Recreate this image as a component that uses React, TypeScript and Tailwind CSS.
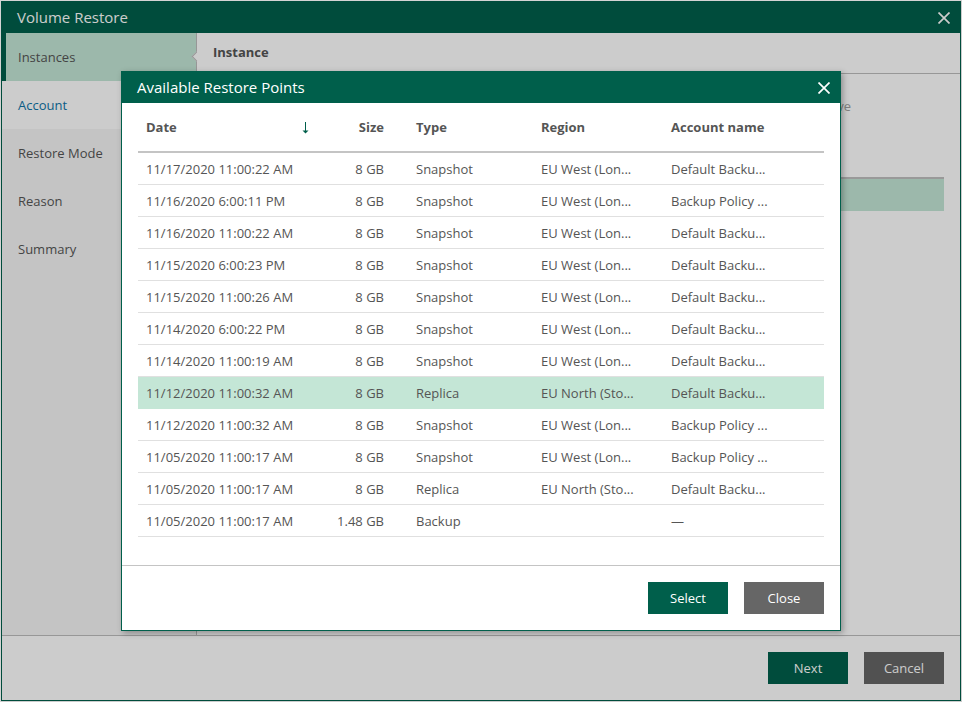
import React from 'react';

interface RestorePoint {
  date: string;
  size: string;
  type: string;
  region: string;
  account: string;
  selected?: boolean;
}

const points: RestorePoint[] = [
  { date: '11/17/2020 11:00:22 AM', size: '8 GB', type: 'Snapshot', region: 'EU West (Lon...', account: 'Default Backu...' },
  { date: '11/16/2020 6:00:11 PM', size: '8 GB', type: 'Snapshot', region: 'EU West (Lon...', account: 'Backup Policy ...' },
  { date: '11/16/2020 11:00:22 AM', size: '8 GB', type: 'Snapshot', region: 'EU West (Lon...', account: 'Default Backu...' },
  { date: '11/15/2020 6:00:23 PM', size: '8 GB', type: 'Snapshot', region: 'EU West (Lon...', account: 'Default Backu...' },
  { date: '11/15/2020 11:00:26 AM', size: '8 GB', type: 'Snapshot', region: 'EU West (Lon...', account: 'Default Backu...' },
  { date: '11/14/2020 6:00:22 PM', size: '8 GB', type: 'Snapshot', region: 'EU West (Lon...', account: 'Default Backu...' },
  { date: '11/14/2020 11:00:19 AM', size: '8 GB', type: 'Snapshot', region: 'EU West (Lon...', account: 'Default Backu...' },
  { date: '11/12/2020 11:00:32 AM', size: '8 GB', type: 'Replica', region: 'EU North (Sto...', account: 'Default Backu...', selected: true },
  { date: '11/12/2020 11:00:32 AM', size: '8 GB', type: 'Snapshot', region: 'EU West (Lon...', account: 'Backup Policy ...' },
  { date: '11/05/2020 11:00:17 AM', size: '8 GB', type: 'Snapshot', region: 'EU West (Lon...', account: 'Backup Policy ...' },
  { date: '11/05/2020 11:00:17 AM', size: '8 GB', type: 'Replica', region: 'EU North (Sto...', account: 'Default Backu...' },
  { date: '11/05/2020 11:00:17 AM', size: '1.48 GB', type: 'Backup', region: '', account: '—' },
];

const columns = 'grid grid-cols-[178px_76px_141px_130px_161px]';

const CloseIcon: React.FC<{ className: string }> = ({ className }) => (
  <svg width="12" height="12" viewBox="0 0 12 12" fill="none" stroke="currentColor" strokeWidth="1.7" className={className}>
    <path d="M0.5 0.5L11.5 11.5M11.5 0.5L0.5 11.5" />
  </svg>
);

const App: React.FC = () => {
  return (
    <div className="relative h-[702px] w-[962px] overflow-hidden border-l border-t border-[#d4d4d4] bg-white pb-px pr-px font-['Open_Sans',sans-serif] text-[13px] text-[#555555]">
      {/* Wizard behind the dialog */}
      <div className="flex h-[700px] w-[960px] flex-col border border-[#005f4b] bg-white">
        <div className="flex h-[31px] shrink-0 items-center justify-between bg-[#005f4b] pl-[15px] pr-[10px] text-[15px] text-white">
          <span>Volume Restore</span>
          <CloseIcon className="text-white" />
        </div>

        <div className="flex min-h-0 flex-1">
          <div className="w-[194px] shrink-0 bg-[#f5f5f5]">
            <div className="relative flex h-12 items-center border-l-4 border-[#005f4b] bg-[#c4e6d6] pl-3 pt-[2px]">
              Instances
              <div className="absolute right-[-4px] top-[20px] h-[7px] w-[7px] rotate-45 border-b border-l border-[#bdbdbd] bg-white" />
            </div>
            <div className="flex h-12 items-center bg-[#ffffff] pl-4 pt-[2px] text-[#0f75a8]">Account</div>
            <div className="flex h-12 items-center pl-4 pt-[2px]">Restore Mode</div>
            <div className="flex h-12 items-center pl-4 pt-[2px]">Reason</div>
            <div className="flex h-12 items-center pl-4 pt-[2px]">Summary</div>
          </div>

          <div className="min-w-0 flex-1 border-l border-[#bdbdbd]">
            <div className="flex h-[41px] items-center border-b border-[#bdbdbd] pl-4 font-bold">Instance</div>
            <p className="mt-[23px] w-[654px] whitespace-nowrap text-right text-[#a0a0a0]">
              Select an instance to restore and choose a restore point to have
            </p>
            <div className="ml-4 mr-4 mt-[60px] h-[34px] border-t-2 border-[#c0c0c0] bg-[#c4e6d6]" />
          </div>
        </div>

        <div className="flex h-[65px] shrink-0 items-start justify-end gap-4 border-t border-[#bdbdbd] pr-[16px] pt-4">
          <button className="h-8 w-20 bg-[#005f4b] pt-[2px] text-white">Next</button>
          <button className="h-8 w-20 bg-[#666666] pt-[2px] text-white">Cancel</button>
        </div>
      </div>

      {/* Modal backdrop */}
      <div className="absolute inset-0 bg-black/20" />

      {/* Available Restore Points dialog */}
      <div className="absolute left-[120px] top-[70px] flex h-[560px] w-[720px] flex-col border border-[#005f4b] bg-white shadow-[2px_2px_6px_rgba(0,0,0,0.3)]">
        <div className="flex h-[31px] shrink-0 items-center justify-between bg-[#005f4b] pl-[15px] pr-[10px] text-[15px] text-white">
          <span>Available Restore Points</span>
          <CloseIcon className="text-white" />
        </div>

        <div className="flex-1 px-4">
          <div className={`${columns} h-[50px] items-center border-b-2 border-[#c4c4c4] pt-[2px] font-bold`}>
            <div className="flex items-center justify-between pl-2 pr-[6px]">
              <span>Date</span>
              <svg width="9" height="12" viewBox="0 0 9 12" className="text-[#005f4b]">
                <path d="M4.5 0V10" stroke="currentColor" strokeWidth="1" />
                <path d="M1.5 8.5H7.5L4.5 11.5Z" fill="currentColor" />
              </svg>
            </div>
            <div className="pr-2 text-right">Size</div>
            <div className="pl-6">Type</div>
            <div className="pl-2">Region</div>
            <div className="pl-2">Account name</div>
          </div>

          {points.map((point, i) => (
            <div
              key={i}
              className={`${columns} h-8 items-center border-b pt-[2px] ${
                point.selected ? 'border-[#c4e6d6] bg-[#c4e6d6]' : 'border-[#e0e0e0]'
              }`}
            >
              <div className="pl-2">{point.date}</div>
              <div className="pr-2 text-right">{point.size}</div>
              <div className="pl-6">{point.type}</div>
              <div className="pl-2">{point.region}</div>
              <div className="pl-2">{point.account}</div>
            </div>
          ))}
        </div>

        <div className="flex h-[65px] shrink-0 items-start justify-end gap-4 border-t border-[#c4c4c4] pr-4 pt-4">
          <button className="h-8 w-20 bg-[#005f4b] pt-[2px] text-white">Select</button>
          <button className="h-8 w-20 bg-[#666666] pt-[2px] text-white">Close</button>
        </div>
      </div>
    </div>
  );
};

export default App;
